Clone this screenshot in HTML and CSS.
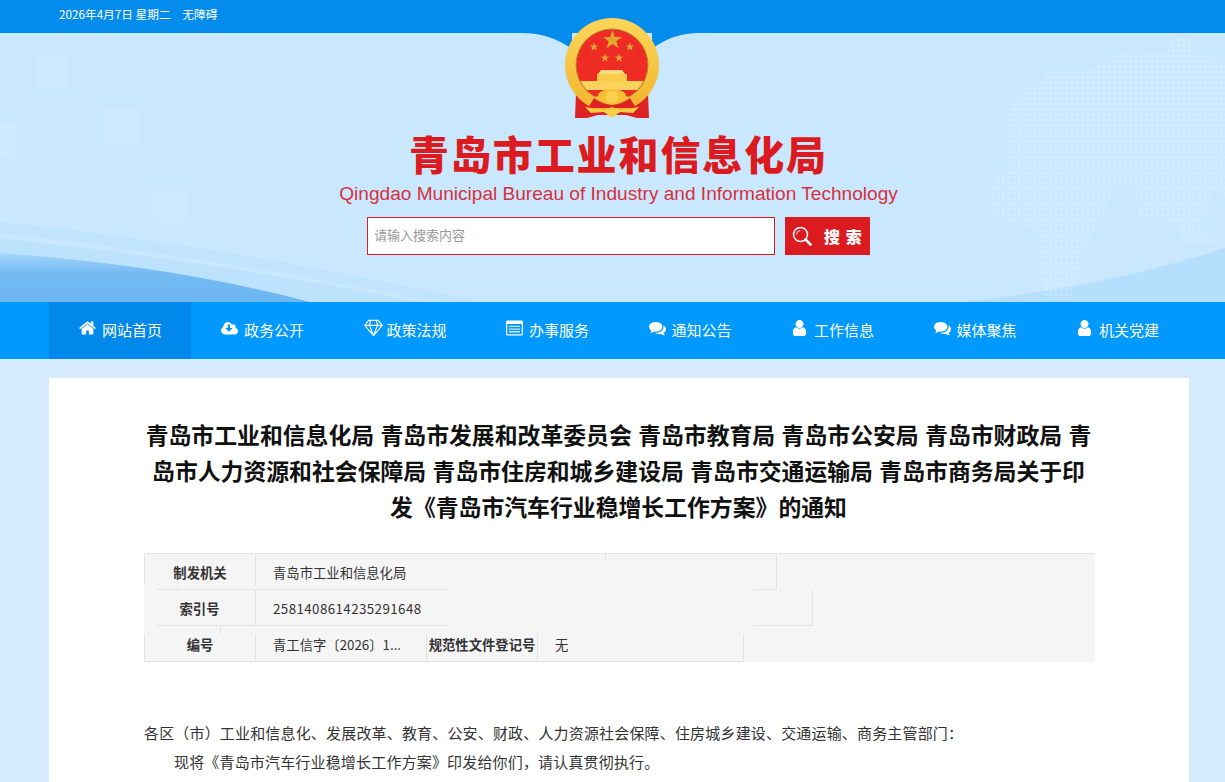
FILE: index.html
```html
<!DOCTYPE html>
<html lang="zh-CN">
<head>
    <meta charset="UTF-8">
    <meta name="viewport" content="width=device-width, initial-scale=1.0">
    <title>青岛市工业和信息化局</title>
    <link rel="stylesheet" href="styles.css">
</head>
<body>

<svg class="icon-defs" width="0" height="0">
    <symbol id="i-home" viewBox="0 0 1664 1536"><path transform="translate(0 -128)" d="M1408 992v480q0 26-19 45t-45 19h-384v-384h-256v384h-384q-26 0-45-19t-19-45v-480q0-1 .5-3t.5-3l575-474 575 474q1 2 1 6zm223-69l-62 74q-8 9-21 11h-3q-13 0-21-7l-692-577-692 577q-12 8-24 7-13-2-21-11l-62-74q-8-10-7-23.500t11-21.500l719-599q32-26 76-26t76 26l244 204v-195q0-14 9-23t23-9h192q14 0 23 9t9 23v408l219 182q10 8 11 21.500t-7 23.500z"/></symbol>
    <symbol id="i-cloud" viewBox="0 128 1920 1536"><path d="M1280 928q0-14-9-23t-23-9h-224v-352q0-13-9.500-22.500t-22.500-9.500h-192q-13 0-22.500 9.500t-9.500 22.500v352h-224q-13 0-22.500 9.500t-9.500 22.500q0 14 9 23l352 352q9 9 23 9t23-9l351-351q10-12 10-24zm640 320q0 159-112.500 271.500t-271.500 112.500h-1088q-185 0-316.500-131.500t-131.500-316.500q0-130 70-240t188-165q-2-30-2-43 0-212 150-362t362-150q156 0 285.500 87t188.500 231q71-62 166-62 106 0 181 75t75 181q0 76-41 138 130 31 213.500 135.500t83.500 238.500z"/></symbol>
    <symbol id="i-gem" viewBox="0 0 20 18"><path d="M5 1h10l4.200 5.200L10 17 .8 6.200zM.8 6.200h18.400M7 1 5.800 6.200 10 17l4.200-10.800L13 1" fill="none" stroke="#fff" stroke-width="1.200" stroke-linejoin="round"/></symbol>
    <symbol id="i-list" viewBox="0 0 17 15"><path d="M1.500 0h14A1.500 1.500 0 0 1 17 1.500v12a1.500 1.500 0 0 1-1.500 1.500h-14A1.500 1.500 0 0 1 0 13.500v-12A1.500 1.500 0 0 1 1.500 0zM1.300 3.500v10.200h14.400V3.500z" fill-rule="evenodd"/><path d="M3 5.200h11v1.300H3zM3 7.900h11v1.300H3zM3 10.600h11v1.300H3z" opacity="0.8"/></symbol>
    <symbol id="i-comments" viewBox="0 128 1792 1536"><path d="M1408 768q0 139-94 257t-256.500 186.500-353.500 68.500q-86 0-176-16-124 88-278 128-36 9-86 16h-3q-11 0-20.500-8t-11.500-21q-1-3-1-6.500t.500-6.500 2-6l2.500-5 3.500-5.500 4-5 4.500-5 4-4.500q5-6 23-25t26-29.500 22.500-29 25-38.500 20.500-44q-124-72-195-177t-71-224q0-139 94-257t256.500-186.500 353.500-68.500 353.500 68.500 256.500 186.500 94 257zm384 256q0 120-71 224.500t-195 176.500q10 24 20.500 44t25 38.500 22.500 29 26 29.500 23 25q1 1 4 4.500t4.500 5 4 5 3.500 5.500l2.500 5 2 6 .500 6.500-1 6.500q-3 14-13 22t-22 7q-50-7-86-16-154-40-278-128-90 16-176 16-271 0-472-132 58 4 88 4 161 0 309-45t264-129q125-92 192-212t67-254q0-77-23-152 129 71 204 178t75 230z"/></symbol>
    <symbol id="i-user" viewBox="256 128 1280 1536"><path d="M1536 1399q0 109-62.500 187t-150.500 78h-854q-88 0-150.500-78t-62.500-187q0-85 8.500-160.500t31.500-152 58.500-131 94-89 134.500-34.500q131 128 313 128t313-128q76 0 134.500 34.500t94 89 58.500 131 31.500 152 8.500 160.500zm-256-887q0 159-112.500 271.500t-271.500 112.500-271.500-112.500-112.500-271.500 112.500-271.500 271.500-112.500 271.500 112.500 112.500 271.500z"/></symbol>
    <symbol id="i-star" viewBox="-10 -10 20 20"><path d="M0-10 2.400-3.100 9.500-3.100 3.800 1.200 5.900 8.100 0 4 -5.900 8.100-3.800 1.200-9.500-3.100-2.400-3.100z"/></symbol>
</svg>

<div class="top-bar">
    <span>2026年4月7日 星期二</span>
    <a href="#" class="top-link">无障碍</a>
</div>

<header class="header">
    <!-- 背景：波浪和世界地图点阵 -->
    <svg class="header-bg" viewBox="0 0 1225 269" preserveAspectRatio="none">
        <defs>
            <pattern id="dots" width="5.300" height="5.300" patternUnits="userSpaceOnUse">
                <rect width="3.400" height="3.400" fill="#fff"/>
            </pattern>
            <linearGradient id="sweep" x1="0" y1="0" x2="0" y2="1">
                <stop offset="0" stop-color="#a6d7fb"/>
                <stop offset="0.4" stop-color="#74bbf3"/>
                <stop offset="1" stop-color="#6cb6f1"/>
            </linearGradient>
        </defs>
        <rect x="0" y="90" width="15" height="35" fill="#fff" opacity="0.1"/>
        <rect x="36" y="18" width="32" height="36" fill="#fff" opacity="0.08"/>
        <rect x="104" y="76" width="35" height="35" fill="#fff" opacity="0.1"/>
        <rect x="153" y="156" width="34" height="34" fill="#fff" opacity="0.08"/>
        <path d="M0 205Q190 225 420 269H0z" fill="#b2dcfb" opacity="0.55"/>
        <path d="M0 189Q200 208 480 269H440Q200 222 0 200z" fill="#b7dffc" opacity="0.5"/>
        <path d="M0 220Q170 232 310 269H0z" fill="url(#sweep)"/>
        <path d="M960 269Q1100 255 1225 215V269z" fill="#b2dcfe" opacity="0.8"/>
        <path d="M1000 87 1017 67 1047 39 1083 39 1113 24 1133 17 1167 20 1172 2 1193 7 1193 17 1225 30V164L1213 157 1200 197 1225 210 1183 210 1177 190 1140 184 1133 154 1113 157 1100 190 1087 210 1080 237 1070 267 1043 267 1037 197 1000 187 988 177 990 154 1007 130 1003 87z" fill="url(#dots)" opacity="0.16"/>
    </svg>

    <!-- 国徽 -->
    <svg class="emblem" viewBox="0 0 96 102">
        <defs>
            <linearGradient id="gold" x1="0" y1="0" x2="0" y2="1">
                <stop offset="0" stop-color="#fbd55a"/>
                <stop offset="1" stop-color="#f2b52c"/>
            </linearGradient>
            <clipPath id="disc"><circle cx="48" cy="47" r="35.500"/></clipPath>
        </defs>
        <path d="M12 74 24 68 72 68 84 74 85 100H73L62 97H34L23 100H11z" fill="#dd2323"/>
        <circle cx="48" cy="47" r="47" fill="url(#gold)"/>
        <circle cx="48" cy="47" r="36" fill="#ee2b24" stroke="#b98a2a" stroke-width="1"/>
        <use href="#i-star" x="38.500" y="12" width="20" height="20" fill="#e4a832"/>
        <use href="#i-star" x="25.500" y="24.500" width="9" height="9" fill="#e0a535"/>
        <use href="#i-star" x="61.500" y="24.500" width="9" height="9" fill="#e0a535"/>
        <use href="#i-star" x="36.500" y="35.500" width="9" height="9" fill="#e0a535"/>
        <use href="#i-star" x="50.500" y="35.500" width="9" height="9" fill="#e0a535"/>
        <g clip-path="url(#disc)">
            <path d="M37 52h21l3 4H34z" fill="#fcdc7c"/>
            <path d="M33 56h30v7H33z" fill="#f9cc4e"/>
            <path d="M10 63h76v9H10z" fill="#fad35c"/>
        </g>
        <path d="M30 80Q38 86 48 87 58 86 66 80L72 90H24z" fill="#dd2323"/>
        <path d="M34 78a14 7 0 0 1 28 0l4 2-18 7-18-7z" fill="#f6c134"/>
        <circle cx="48" cy="79" r="6" fill="#f9d050"/>
        <path d="M21 89 40 92 48 89 56 92 75 89 69 95 56 94 48 100 40 94 27 95z" fill="#f8cd48"/>
    </svg>

    <h1 class="site-title">青岛市工业和信息化局</h1>
    <p class="site-title-en">Qingdao Municipal Bureau of Industry and Information Technology</p>

    <form class="search">
        <input type="text" class="search-input" placeholder="请输入搜索内容">
        <button type="button" class="search-btn">
            <svg class="search-icon" viewBox="0 0 20 20"><circle cx="8.500" cy="8.500" r="7" fill="none" stroke="#fff" stroke-width="1.500"/><path d="M4.500 8.500A4 4 0 0 1 8 4.500" fill="none" stroke="#fff"/><path d="M13.500 13.500 18.500 18.500" stroke="#fff" stroke-width="2.500" stroke-linecap="round"/></svg>
            <span class="search-text">搜 索</span>
        </button>
    </form>
</header>

<nav class="nav">
    <a href="#" class="nav-item active"><svg class="nav-icon"><use href="#i-home"/></svg>网站首页</a>
    <a href="#" class="nav-item"><svg class="nav-icon"><use href="#i-cloud"/></svg>政务公开</a>
    <a href="#" class="nav-item"><svg class="nav-icon icon-gem"><use href="#i-gem"/></svg>政策法规</a>
    <a href="#" class="nav-item"><svg class="nav-icon"><use href="#i-list"/></svg>办事服务</a>
    <a href="#" class="nav-item"><svg class="nav-icon"><use href="#i-comments"/></svg>通知公告</a>
    <a href="#" class="nav-item"><svg class="nav-icon"><use href="#i-user"/></svg>工作信息</a>
    <a href="#" class="nav-item"><svg class="nav-icon"><use href="#i-comments"/></svg>媒体聚焦</a>
    <a href="#" class="nav-item"><svg class="nav-icon"><use href="#i-user"/></svg>机关党建</a>
</nav>

<main class="article">
    <h2 class="article-title">青岛市工业和信息化局 青岛市发展和改革委员会 青岛市教育局 青岛市公安局 青岛市财政局 青岛市人力资源和社会保障局 青岛市住房和城乡建设局 青岛市交通运输局 青岛市商务局关于印发《青岛市汽车行业稳增长工作方案》的通知</h2>

    <div class="info">
        <div class="info-row row-1">
            <div class="info-label">制发机关</div>
            <div class="info-value">青岛市工业和信息化局</div>
            <i class="tick tick-top"></i>
            <i class="tick tick-under"></i>
            <i class="edge edge-1"></i>
        </div>
        <div class="info-row row-2">
            <div class="info-label">索引号</div>
            <div class="info-value value-number">2581408614235291648</div>
            <i class="tick tick-under2"></i>
            <i class="edge edge-2"></i>
        </div>
        <div class="info-row row-3">
            <div class="info-label">编号</div>
            <div class="info-value value-short">青工信字〔2026〕1...</div>
            <div class="info-label label-wide">规范性文件登记号</div>
            <div class="info-value value-last">无</div>
        </div>
    </div>

    <div class="article-body">
        <p>各区（市）工业和信息化、发展改革、教育、公安、财政、人力资源社会保障、住房城乡建设、交通运输、商务主管部门：</p>
        <p class="indent">现将《青岛市汽车行业稳增长工作方案》印发给你们，请认真贯彻执行。</p>
    </div>
</main>

</body>
</html>
```

FILE: styles.css
```css
body {
    margin: 0;
    padding: 0;
    background-color: #d6ebff;
    font-family: "Noto Sans CJK SC", "Liberation Sans", sans-serif;
    color: #333;
}
a {
    color: inherit;
    text-decoration: none;
}
.icon-defs {
    position: absolute;
}
.top-bar {
    height: 33px;
    padding-left: 59px;
    background-color: #048ced;
    color: #fff;
    font-size: 11.700px;
    line-height: 28px;
    box-sizing: border-box;
}
.top-link {
    margin-left: 9px;
}
.header {
    position: relative;
    height: 269px;
    padding-left: 12px;
    box-sizing: border-box;
    background-color: #c9e8ff;
    display: flex;
    flex-direction: column;
    align-items: center;
}
.header-bg {
    position: absolute;
    left: 0;
    top: 0;
    width: 100%;
    height: 100%;
}
.header::before,
.header::after {
    content: '';
    position: absolute;
    top: 0;
    width: 48px;
    height: 16px;
    background-color: #048ced;
    z-index: 1;
}
.header::before {
    left: 522px;
    width: 50px;
    clip-path: path('M0 0H50V16Q28 0 0 0Z');
}
.header::after {
    left: 652px;
    clip-path: path('M0 16Q20 0 48 0H0Z');
}
.emblem {
    position: absolute;
    left: 564px;
    top: -15px;
    width: 96px;
    height: 102px;
    z-index: 2;
}
.site-title {
    position: relative;
    margin: 98px 0 0;
    font-size: 40px;
    line-height: 44px;
    font-weight: 900;
    letter-spacing: 1.900px;
    color: #dc1b21;
}
.site-title-en {
    position: relative;
    margin: 6px 0 0;
    font-family: "Liberation Sans", sans-serif;
    font-size: 19.080px;
    line-height: 26px;
    color: #d8303c;
}
.search {
    position: relative;
    margin: 10px 0 0;
    display: flex;
    gap: 10px;
}
.search-input {
    width: 408px;
    height: 38px;
    padding: 0 6px 4px;
    box-sizing: border-box;
    border: 1px solid #dc1b21;
    background-color: #fff;
    font-family: inherit;
    font-size: 13px;
    outline: none;
}
.search-input::placeholder {
    color: #999;
}
.search-btn {
    width: 85px;
    height: 38px;
    padding: 0 0 0 7px;
    border: none;
    background-color: #dc1b21;
    color: #fff;
    font-family: inherit;
    font-size: 16px;
    font-weight: 900;
    display: flex;
    align-items: center;
    gap: 12px;
    cursor: pointer;
}
.search-text {
    letter-spacing: 1px;
}
.search-icon {
    width: 20px;
    height: 20px;
}
.nav {
    height: 57px;
    padding-left: 49px;
    background-color: #0099ff;
    display: flex;
}
.nav-item {
    width: 142.500px;
    padding-left: 30px;
    padding-bottom: 2px;
    box-sizing: border-box;
    display: flex;
    align-items: center;
    gap: 6px;
    color: #fff;
    font-size: 15px;
}
.nav-item.active {
    width: 142px;
    background-color: #0088ea;
}
.nav-icon {
    width: 17px;
    height: 16px;
    margin-top: -3px;
    fill: #fff;
}
.icon-gem {
    width: 19px;
    height: 18px;
    margin-right: -2px;
}
.article {
    width: 1140px;
    margin: 19px 0 0 49px;
    padding: 38px 94px 0 95px;
    box-sizing: border-box;
    background-color: #fff;
}
.article-title {
    margin: 0;
    padding-right: 2px;
    font-size: 22.850px;
    word-spacing: 1.200px;
    line-height: 36px;
    font-weight: 700;
    color: #111;
    text-align: center;
}
.info {
    margin-top: 29px;
    border-top: 1px solid #e3e3e3;
    background-color: #f5f5f5;
    font-size: 13.330px;
}
.info-row {
    position: relative;
    display: flex;
    height: 36px;
}
.row-1 {
    background: linear-gradient(#e3e3e3, #e3e3e3) 13px 100%/291px 1px no-repeat,
                linear-gradient(#e3e3e3, #e3e3e3) 610px 100%/23px 1px no-repeat;
}
.row-2 {
    background: linear-gradient(#e3e3e3, #e3e3e3) 13px 100%/291px 1px no-repeat,
                linear-gradient(#e3e3e3, #e3e3e3) 610px 100%/59px 1px no-repeat;
}
.row-3 {
    background: linear-gradient(#e3e3e3, #e3e3e3) 0 100%/600px 1px no-repeat;
}
.info-label {
    width: 112px;
    font-weight: 700;
    text-align: center;
    border-right: 1px solid #e3e3e3;
    flex-shrink: 0;
    box-sizing: border-box;
}
.info-value {
    padding-left: 17px;
    white-space: nowrap;
}
.row-1 .info-label,
.row-1 .info-value {
    line-height: 37px;
}
.row-1 .info-label {
    height: 31px;
    border-left: 1px solid #e3e3e3;
}
.row-2 .info-label {
    height: 35px;
    line-height: 38px;
}
.row-2 .info-value {
    line-height: 38px;
}
.value-number {
    letter-spacing: 0.420px;
}
.row-3 .info-label {
    height: 27px;
    margin-top: 8px;
    line-height: 22px;
    border-left: 1px solid #e3e3e3;
}
.row-3 .info-value {
    margin-top: 8px;
    line-height: 22px;
}
.row-3 .value-short {
    width: 171px;
    box-sizing: border-box;
    border-right: 1px solid #e3e3e3;
    height: 27px;
}
.row-3 .label-wide {
    border-left: none;
    white-space: nowrap;
    width: 111px;
}
.row-3 .value-last {
    width: 206px;
    box-sizing: border-box;
    height: 27px;
    border-right: 1px solid #e3e3e3;
}
.tick,
.edge {
    position: absolute;
    width: 1px;
    background-color: #e3e3e3;
}
.tick-top {
    left: 461px;
    top: 0;
    height: 7px;
}
.tick-under {
    left: 33px;
    top: 31px;
    height: 5px;
}
.tick-under2 {
    left: 76px;
    top: 36px;
    height: 8px;
}
.edge-1 {
    left: 632px;
    top: 0;
    height: 36px;
}
.edge-2 {
    left: 668px;
    top: 0;
    height: 36px;
}
.article-body {
    margin-top: 56px;
    padding-bottom: 20px;
    font-size: 15px;
    line-height: 29px;
    letter-spacing: 0.170px;
}
.article-body p {
    margin: 0;
}
.article-body .indent {
    text-indent: 30px;
}
```
